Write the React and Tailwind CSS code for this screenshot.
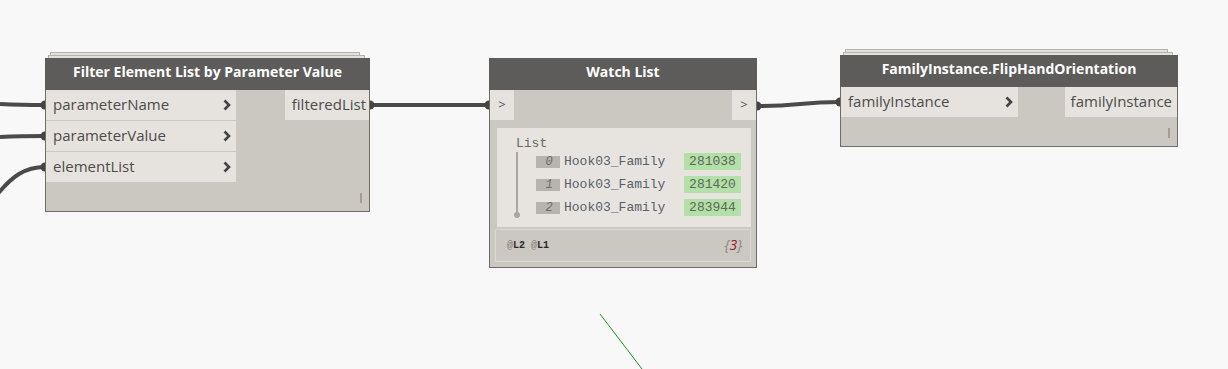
import React from 'react';

const ui = { fontFamily: '"Open Sans", "Noto Sans", sans-serif' };
const mono = { fontFamily: '"Liberation Mono", "DejaVu Sans Mono", monospace' };

function Chevron() {
    return (
        <svg width="8" height="12" viewBox="0 0 8 12" className="shrink-0">
            <polyline points="1.5,1.5 6,6 1.5,10.5" fill="none" stroke="#444" strokeWidth="2.6" />
        </svg>
    );
}

function Stack() {
    // the two ghost layers peeking above a node
    return (
        <>
            <div className="absolute -top-[6px] left-[5px] right-[10px] h-[10px] border border-[#b4b2af] bg-[#e4e1dc]" />
            <div className="absolute -top-[3px] left-[3px] right-[5px] h-[10px] border border-[#b4b2af] bg-[#e4e1dc]" />
        </>
    );
}

function PortRow({ label, width }) {
    return (
        <div className={`flex h-[30px] items-center justify-between bg-[#e6e3de] pb-[1px] pl-[7px] pr-[5px] ${width}`}>
            <span className="text-[15px] text-[#4c4c4c]">{label}</span>
            <Chevron />
        </div>
    );
}

function Grip() {
    return <div className="h-[10px] w-[2px] bg-[#a49d96]" />;
}

function Header({ children }) {
    return (
        <div className="relative flex h-[32px] items-center justify-center bg-[#5e5c5a] pb-[5px] text-[14px] font-bold text-white">
            {children}
        </div>
    );
}

function FilterNode() {
    return (
        <div className="absolute left-[45px] top-[58px] w-[325px]" style={ui}>
            <Stack />
            <Header>Filter Element List by Parameter Value</Header>
            <div className="relative flex h-[122px] border border-t-0 border-[#6e6b68] bg-[#cbc7c1]">
                <div className="flex flex-col gap-[1px]">
                    <PortRow label="parameterName" width="w-[190px]" />
                    <PortRow label="parameterValue" width="w-[190px]" />
                    <PortRow label="elementList" width="w-[190px]" />
                </div>
                <div className="flex flex-1 flex-col items-end justify-between pb-[8px] pr-[7px]">
                    <div className="-mr-[7px] flex h-[30px] w-[84px] items-center justify-end bg-[#e6e3de] pb-[1px] pr-[3px] text-[15px] text-[#4c4c4c]">
                        filteredList
                    </div>
                    <Grip />
                </div>
            </div>
        </div>
    );
}

function WatchNode() {
    const rows = [
        ['0', '281038'],
        ['1', '281420'],
        ['2', '283944'],
    ];
    return (
        <div className="absolute left-[489px] top-[58px] w-[268px]" style={ui}>
            <Header>Watch List</Header>
            <div className="flex flex-col border border-t-0 border-[#6e6b68] bg-[#cbc7c1] pb-[5px]">
                <div className="flex justify-between">
                    <div className="flex h-[30px] w-[24px] items-center justify-center bg-[#e6e3de] text-[13px] text-[#555]">&gt;</div>
                    <div className="flex h-[30px] w-[24px] items-center justify-center bg-[#e6e3de] text-[13px] text-[#555]">&gt;</div>
                </div>
                <div className="mx-[7px] mt-[8px] mr-[5px] h-[99px] bg-[#e7e4df] pl-[19px] pt-[9px]" style={mono}>
                    <div className="text-[13px] leading-[14px] text-[#6a6a6a]">List</div>
                    <div className="flex">
                        <div className="relative mt-[1px] flex w-[20px] justify-start">
                            <div className="h-[63px] w-[2px] bg-[#aaa6a0]" />
                            <div className="absolute left-[-2px] top-[60px] h-[6px] w-[6px] rounded-full bg-[#aaa6a0]" />
                        </div>
                        <div className="flex flex-col gap-[6px] pt-[2px]">
                            {rows.map(([i, v]) => (
                                <div key={i} className="flex h-[17px] items-center">
                                    <div className="flex h-[12px] w-[24px] items-center justify-center bg-[#b7b3ae] pl-[2px] text-[12px] italic text-[#6f6c68]">
                                        {i}
                                    </div>
                                    <div className="ml-[4px] w-[120px] text-[13px] text-[#56606c]">Hook03_Family</div>
                                    <div className="flex h-[17px] w-[57px] items-center justify-center bg-[#b3dfa8] text-[13px] text-[#5b685a]">
                                        {v}
                                    </div>
                                </div>
                            ))}
                        </div>
                    </div>
                </div>
                <div className="mx-[5px] mt-[2px] flex h-[33px] items-center justify-between border border-[#dcd8d2] pl-[11px] pr-[8px]">
                    <span className="text-[10px] font-bold" style={mono}>
                        <span className="text-[#8a8680]">@</span><span className="text-[#2a2a2a]">L2</span>{' '}
                        <span className="text-[#8a8680]">@</span><span className="text-[#2a2a2a]">L1</span>
                    </span>
                    <span className="pb-[3px] text-[14px] italic text-[#8d8780]">
                        {'{'}<span className="text-[#8e1c1c]">3</span>{'}'}
                    </span>
                </div>
            </div>
        </div>
    );
}

function FlipNode() {
    return (
        <div className="absolute left-[840px] top-[55px] w-[338px]" style={ui}>
            <Stack />
            <Header>FamilyInstance.FlipHandOrientation</Header>
            <div className="relative flex h-[60px] border border-t-0 border-[#6e6b68] bg-[#cbc7c1]">
                <PortRow label="familyInstance" width="w-[177px]" />
                <div className="flex flex-1 flex-col items-end justify-between pb-[8px] pr-[7px]">
                    <div className="-mr-[7px] flex h-[30px] w-[112px] items-center justify-end bg-[#e6e3de] pb-[1px] pr-[5px] text-[15px] text-[#4c4c4c]">
                        familyInstance
                    </div>
                    <Grip />
                </div>
            </div>
        </div>
    );
}

export default function App() {
    const wire = { fill: 'none', stroke: '#4a4a4a', strokeWidth: 4 };
    return (
        <div className="relative h-[369px] w-[1228px] overflow-hidden bg-[#f8f8f8]">
            {/* Wires */}
            <svg className="absolute inset-0" width="1228" height="369">
                <path d="M0 104 C 20 105, 30 105, 45 105" style={wire} />
                <path d="M0 137 C 20 136, 30 136, 45 136" style={wire} />
                <path d="M-4 196 C 12 176, 25 167, 45 167" style={wire} />
                <path d="M370 105 L 489 105" style={wire} />
                <path d="M757 106 C 800 106, 800 102, 840 102" style={wire} />
                <circle cx="45" cy="105" r="4.5" fill="#444" />
                <circle cx="45" cy="136" r="4.5" fill="#444" />
                <circle cx="45" cy="167" r="4.5" fill="#444" />
                <circle cx="370" cy="105" r="4.5" fill="#444" />
                <circle cx="489" cy="105" r="4.5" fill="#444" />
                <circle cx="757" cy="106" r="4.5" fill="#444" />
                <circle cx="840" cy="102" r="4.5" fill="#444" />
                <line x1="600" y1="314" x2="642" y2="369" stroke="#179317" strokeWidth="1" />
            </svg>

            <FilterNode />
            <WatchNode />
            <FlipNode />
        </div>
    );
}
